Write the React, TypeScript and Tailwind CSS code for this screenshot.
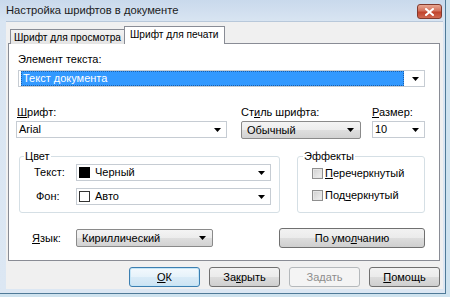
import type { ReactNode } from "react";

function Arrow() {
  return (
    <svg width="7" height="4" viewBox="0 0 7 4" className="shrink-0">
      <path d="M0 0h7L3.5 4z" fill="#000" />
    </svg>
  );
}

function EditCombo({ className, children }: { className: string; children: ReactNode }) {
  return (
    <div
      className={`flex h-[17px] items-center border border-[#c6ccd3] bg-white pl-[2px] pr-[5px] ${className}`}
    >
      <div className="flex min-w-0 flex-1 items-center">{children}</div>
      <Arrow />
    </div>
  );
}

function ListCombo({ className, children }: { className: string; children: ReactNode }) {
  return (
    <div
      className={`flex h-[18px] items-center rounded-[2px] border border-[#8a8a8a] bg-[linear-gradient(#f4f4f4,#ececec_50%,#dedede_50%,#d2d2d2)] pl-[5px] pr-[6px] ${className}`}
    >
      <div className="flex-1">{children}</div>
      <Arrow />
    </div>
  );
}

function Button({
  children,
  kind = "normal",
  className = "w-[71px]",
}: {
  children: ReactNode;
  kind?: "normal" | "default" | "disabled";
  className?: string;
}) {
  const look =
    kind === "default"
      ? "border-[#3c7fb1] bg-[linear-gradient(#f3f9fd,#e6f2fa_50%,#d9ebf7_50%,#cde4f3)] shadow-[inset_0_0_0_1px_#c4e5f7]"
      : kind === "disabled"
        ? "border-[#b5b9bc] bg-[#f4f4f4] text-[#8d8d8d]"
        : "border-[#707070] bg-[linear-gradient(#f2f2f2,#ebebeb_50%,#dddddd_50%,#cfcfcf)]";
  return (
    <div
      className={`flex h-[20px] items-center justify-center rounded-[3px] border ${look} ${className}`}
    >
      {children}
    </div>
  );
}

function Check({ children }: { children: ReactNode }) {
  return (
    <div className="flex h-[13px] items-center gap-[2px]">
      <span className="h-[11px] w-[11px] border border-[#8f8f8f] bg-[linear-gradient(135deg,#cfcfcf,#f2f2f2)] shadow-[inset_0_0_0_1px_#e6e6e6]" />
      <span>{children}</span>
    </div>
  );
}

export default function App() {
  return (
    <div className="relative h-[297px] w-[450px] overflow-hidden bg-[#cfe3ef] font-['Liberation_Sans',sans-serif] text-[11px] leading-[13px] text-black">
      <div className="flex h-[294px] w-[446px] flex-col border-b border-r border-[#4f7a98] bg-[linear-gradient(#c9d9ec,#d9e5f2_22px,#dce7f3)]">
        {/* Title bar */}
        <div className="flex h-[21px] shrink-0 items-center justify-between pl-[6px] pr-[3px]">
          <span className="text-[11.2px] text-[#1b1b1b]">Настройка шрифтов в документе</span>
          <div className="mt-[2px] flex h-[15px] w-[25px] items-center justify-center rounded-[3px] border border-[#82392d] bg-[linear-gradient(#e9a793,#d2715c_45%,#c1432c_55%,#d06a52)]">
            <svg width="9" height="8" viewBox="0 0 9 8">
              <path d="M1 1l7 6M8 1L1 7" stroke="#fff" strokeWidth="2" strokeLinecap="square" />
            </svg>
          </div>
        </div>

        {/* Client area */}
        <div className="ml-[6px] mr-[2px] flex h-[268px] flex-col border-t border-[#b8c8da] bg-[#f0f0f0]">
          {/* Tabs */}
          <div className="relative z-10 -mb-px mt-[4px] flex h-[18px] items-end pl-[4px] text-[10.2px]">
            <div className="flex h-[15px] items-center border border-b-0 border-[#898c95] bg-[linear-gradient(#f3f3f3,#e4e4e4)] px-[3px]">
              Шрифт для просмотра
            </div>
            <div className="-ml-px flex h-[18px] items-center border border-b-0 border-[#898c95] bg-white px-[5px] pb-[2px]">
              Шрифт для печати
            </div>
          </div>

          {/* Panel */}
          <div className="ml-[2px] flex h-[218px] w-[432px] flex-col border border-[#898c95] bg-white pl-[9px] pr-[14px] pt-[9px]">
            <div>Элемент текста:</div>
            <EditCombo className="mt-[4px] w-full">
              <div className="mr-[8px] flex h-[15px] flex-1 items-center border border-dotted border-[#1e5fa8] bg-[#3399ff] pl-[1px] text-white">
                Текст документа
              </div>
            </EditCombo>

            <div className="mt-[19px] flex">
              <div className="-ml-[2px] flex w-[211px] flex-col">
                <div className="pl-[1px]">
                  <u>Ш</u>рифт:
                </div>
                <EditCombo className="mt-[2px] w-full">Arial</EditCombo>
              </div>
              <div className="ml-[14px] flex w-[120px] flex-col">
                <div>
                  Ст<u>и</u>ль шрифта:
                </div>
                <ListCombo className="mt-[2px] w-full">Обычный</ListCombo>
              </div>
              <div className="ml-auto flex w-[53px] flex-col">
                <div>
                  <u>Р</u>азмер:
                </div>
                <EditCombo className="mt-[2px] w-full">10</EditCombo>
              </div>
            </div>

            <div className="mt-[11px] flex">
              <fieldset className="ml-[1px] h-[63px] w-[261px] rounded-[3px] border border-[#d5dfe5]">
                <legend className="ml-[4px] px-[1px]">Цвет</legend>
                <div className="pl-[14px] pr-[8px]">
                  <div className="mt-[1px] flex items-center">
                    <span className="w-[42px]">Текст:</span>
                    <EditCombo className="flex-1">
                      <span className="mr-[5px] h-[11px] w-[11px] bg-black" />
                      Черный
                    </EditCombo>
                  </div>
                  <div className="mt-[7px] flex items-center">
                    <span className="w-[42px] pl-[2px]">Фон:</span>
                    <EditCombo className="flex-1">
                      <span className="mr-[5px] h-[11px] w-[11px] border border-[#333] bg-white" />
                      Авто
                    </EditCombo>
                  </div>
                </div>
              </fieldset>
              <fieldset className="ml-auto h-[63px] w-[128px] rounded-[3px] border border-[#d5dfe5]">
                <legend className="ml-[5px] px-[1px]">Эффекты</legend>
                <div className="mt-[4px] flex flex-col gap-[9px] pl-[14px]">
                  <Check>
                    <u>П</u>еречеркнутый
                  </Check>
                  <Check>
                    Под<u>ч</u>еркнутый
                  </Check>
                </div>
              </fieldset>
            </div>

            <div className="mt-[15px] flex items-center">
              <span className="ml-[14px] w-[44px]">
                <u>Я</u>зык:
              </span>
              <ListCombo className="w-[137px]">Кириллический</ListCombo>
              <Button className="ml-auto w-[146px]">
                <span>
                  По умо<u>л</u>чанию
                </span>
              </Button>
            </div>
          </div>

          {/* Dialog buttons */}
          <div className="mt-[6px] flex justify-end gap-[9px] pr-[3px]">
            <Button kind="default">
              <span>
                <u>О</u>К
              </span>
            </Button>
            <Button>
              <span>
                За<u>к</u>рыть
              </span>
            </Button>
            <Button kind="disabled">
              <span>
                За<u>д</u>ать
              </span>
            </Button>
            <Button>
              <span>
                <u>П</u>омощь
              </span>
            </Button>
          </div>
        </div>
      </div>
    </div>
  );
}
